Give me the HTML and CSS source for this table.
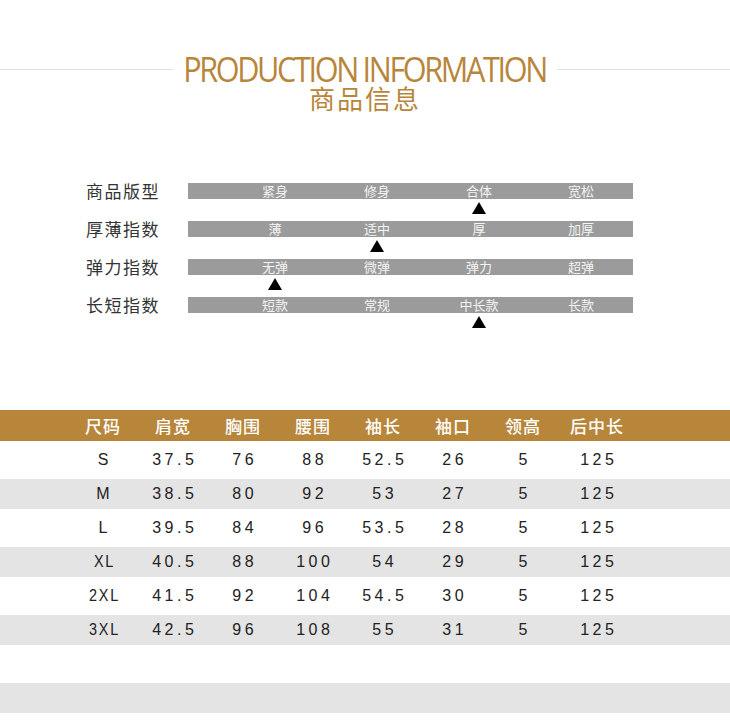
FILE: index.html
```html
<!DOCTYPE html>
<html lang="zh-CN">
<head>
<meta charset="utf-8">
<title>商品信息</title>
<link rel="stylesheet" href="styles.css">
</head>
<body>
<div class="page">
  <header class="title">
    <div class="title-row">
      <span class="rule"></span>
      <h1>PRODUCTION INFORMATION</h1>
      <span class="rule"></span>
    </div>
    <h2>商品信息</h2>
  </header>

  <section class="indexes">
    <div class="idx-row">
      <div class="idx-label">商品版型</div>
      <div class="track">
        <div class="bar"><span>紧身</span><span>修身</span><span>合体</span><span>宽松</span></div>
        <div class="marks"><i></i><i></i><i class="tri"></i><i></i></div>
      </div>
    </div>
    <div class="idx-row">
      <div class="idx-label">厚薄指数</div>
      <div class="track">
        <div class="bar"><span>薄</span><span>适中</span><span>厚</span><span>加厚</span></div>
        <div class="marks"><i></i><i class="tri"></i><i></i><i></i></div>
      </div>
    </div>
    <div class="idx-row">
      <div class="idx-label">弹力指数</div>
      <div class="track">
        <div class="bar"><span>无弹</span><span>微弹</span><span>弹力</span><span>超弹</span></div>
        <div class="marks"><i class="tri"></i><i></i><i></i><i></i></div>
      </div>
    </div>
    <div class="idx-row">
      <div class="idx-label">长短指数</div>
      <div class="track">
        <div class="bar"><span>短款</span><span>常规</span><span>中长款</span><span>长款</span></div>
        <div class="marks"><i></i><i></i><i class="tri"></i><i></i></div>
      </div>
    </div>
  </section>

  <section class="sizes">
    <div class="trow thead">
      <span>尺码</span><span>肩宽</span><span>胸围</span><span>腰围</span><span>袖长</span><span>袖口</span><span>领高</span><span>后中长</span>
    </div>
    <div class="tbody">
      <div class="trow"><span>S</span><span>37.5</span><span>76</span><span>88</span><span>52.5</span><span>26</span><span>5</span><span>125</span></div>
      <div class="trow alt"><span>M</span><span>38.5</span><span>80</span><span>92</span><span>53</span><span>27</span><span>5</span><span>125</span></div>
      <div class="trow"><span>L</span><span>39.5</span><span>84</span><span>96</span><span>53.5</span><span>28</span><span>5</span><span>125</span></div>
      <div class="trow alt"><span class="cond">XL</span><span>40.5</span><span>88</span><span>100</span><span>54</span><span>29</span><span>5</span><span>125</span></div>
      <div class="trow"><span class="cond">2XL</span><span>41.5</span><span>92</span><span>104</span><span>54.5</span><span>30</span><span>5</span><span>125</span></div>
      <div class="trow alt"><span class="cond">3XL</span><span>42.5</span><span>96</span><span>108</span><span>55</span><span>31</span><span>5</span><span>125</span></div>
      <div class="trow"></div>
      <div class="trow alt"></div>
    </div>
  </section>
</div>
</body>
</html>
```

FILE: styles.css
```css
* { box-sizing: border-box; }
html, body { margin: 0; padding: 0; background: #fff; }
body {
  font-family: "Noto Sans CJK SC", "Noto Sans", sans-serif;
  color: #333;
}
.page { width: 730px; }

/* title */
.title { padding-top: 54px; }
.title-row {
  display: flex;
  align-items: center;
  gap: 10px;
}
.rule { flex: 1; height: 1px; background: #e2e2e2; }
.title h1 {
  margin: 0 -20px;
  font-family: "Open Sans", "Noto Sans", sans-serif;
  font-weight: 400;
  font-size: 34px;
  line-height: 30px;
  letter-spacing: -2.6px;
  color: #b8863b;
  white-space: nowrap;
  transform: scaleX(0.9);
}
.title h2 {
  margin: 1px 0 0;
  text-align: center;
  font-weight: 400;
  font-size: 26px;
  line-height: 26px;
  letter-spacing: 2px;
  color: #b8863b;
}

/* indexes */
.indexes { margin-top: 72px; }
.idx-row { display: flex; align-items: flex-start; }
.idx-label {
  width: 188px;
  padding-left: 86px;
  font-size: 17px;
  line-height: 16px;
  letter-spacing: 1.5px;
  color: #333;
  white-space: nowrap;
}
.track { width: 445px; }
.bar {
  height: 16px;
  background: #9b9b9b;
  display: grid;
  grid-template-columns: repeat(4, 102px);
  padding-left: 36px;
}
.bar span {
  text-align: center;
  font-size: 13px;
  line-height: 16px;
  color: #f4f4f4;
}
.marks {
  height: 22px;
  display: grid;
  grid-template-columns: repeat(4, 102px);
  padding-left: 36px;
}
.marks i { display: block; }
.marks .tri {
  justify-self: center;
  width: 0;
  height: 0;
  margin-top: 3px;
  border-left: 7px solid transparent;
  border-right: 7px solid transparent;
  border-bottom: 12px solid #000;
}

/* size table */
.sizes { margin-top: 75px; }
.trow {
  display: grid;
  grid-template-columns: repeat(7, 70px) 78px;
  padding-left: 68px;
  align-items: center;
}
.trow span { text-align: center; }
.thead {
  height: 31px;
  background: #b8863b;
}
.thead span {
  color: #fff;
  font-size: 17px;
  font-weight: 500;
  letter-spacing: 1px;
  line-height: 31px;
}
.tbody { margin-top: 2px; }
.tbody .trow {
  height: 34px;
  border-top: 2px solid #fff;
  border-bottom: 2px solid #fff;
  background-clip: padding-box;
}
.tbody .trow.alt { background-color: #e4e4e4; }
.tbody .trow span {
  font-family: "Liberation Sans", Arial, sans-serif;
  font-size: 16px;
  letter-spacing: 3.5px;
  padding-left: 3.5px;
  color: #222;
  line-height: 30px;
}
.tbody .trow span.cond { letter-spacing: 2px; transform: scaleX(0.9); }
```
